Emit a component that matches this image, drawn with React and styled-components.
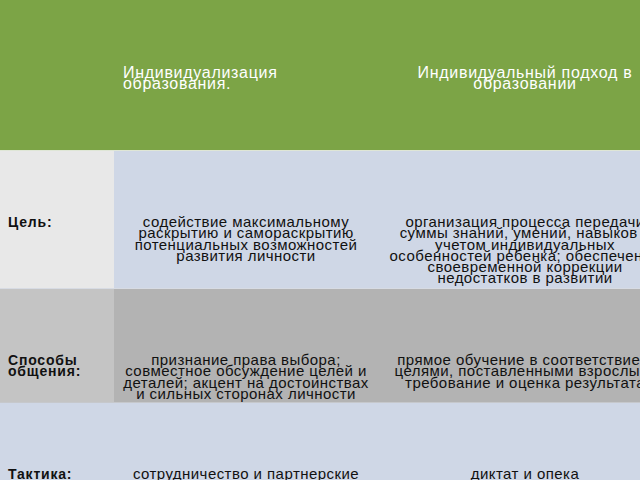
import React from "react";
import styled, { createGlobalStyle } from "styled-components";

const GlobalStyle = createGlobalStyle`
  html, body {
    margin: 0;
    padding: 0;
    background: #cfd7e6;
  }
  body {
    font-family: "Liberation Sans", Arial, sans-serif;
  }
`;

const Page = styled.div`
  width: 640px;
  height: 480px;
  overflow: hidden;
  background: #cfd7e6;
`;

const Table = styled.div`
  width: 672px;
  display: flex;
  flex-direction: column;
`;

const Row = styled.div`
  display: grid;
  grid-template-columns: 114px 264px 294px;
  height: ${p => p.$height}px;
  border-bottom: 1px solid ${p => p.$line || "transparent"};
`;

const Cell = styled.div`
  background: ${p => p.$bg};
  color: #111;
  font-size: 15px;
  line-height: 11.3px;
  letter-spacing: 0.45px;
  text-align: center;
  padding-top: 65px;
  white-space: nowrap;
  overflow: hidden;
`;

const LabelCell = styled(Cell)`
  font-size: 14px;
  letter-spacing: 0.8px;
  font-weight: 700;
  text-align: left;
  padding-top: 66px;
  padding-left: 8px;
`;

const HeadCell = styled(Cell)`
  background: #7ca446;
  color: #fff;
  font-size: 16px;
  letter-spacing: 0.7px;
  text-align: ${p => (p.$left ? "left" : "center")};
  padding-left: ${p => (p.$left ? 9 : 0)}px;
  padding-top: 67px;
`;

const rows = [
  {
    height: 150,
    line: "#dfe6d6",
    head: true,
    cells: [
      [""],
      ["Индивидуализация", "образования."],
      ["Индивидуальный подход в", "образовании"],
    ],
  },
  {
    height: 137,
    line: "#d7dbe3",
    bg: ["#e8e8e8", "#cfd7e6", "#cfd7e6"],
    cells: [
      ["Цель:"],
      [
        "содействие максимальному",
        "раскрытию и самораскрытию",
        "потенциальных возможностей",
        "развития личности",
      ],
      [
        "организация процесса передачи",
        "суммы знаний, умений, навыков с",
        "учетом индивидуальных",
        "особенностей ребенка; обеспечение",
        "своевременной коррекции",
        "недостатков в развитии",
      ],
    ],
  },
  {
    height: 113,
    line: "#c6c8cc",
    bg: ["#c4c4c4", "#b3b3b3", "#b3b3b3"],
    cells: [
      ["Способы", "общения:"],
      [
        "признание права выбора;",
        "совместное обсуждение целей и",
        "деталей; акцент на достоинствах",
        "и сильных сторонах личности",
      ],
      [
        "прямое обучение в соответствие с",
        "целями, поставленными взрослым;",
        "требование и оценка результата",
      ],
    ],
  },
  {
    height: 160,
    bg: ["#cfd7e6", "#cfd7e6", "#cfd7e6"],
    cells: [
      ["Тактика:"],
      ["сотрудничество и партнерские", "отношения"],
      ["диктат и опека"],
    ],
  },
];

const Lines = ({ lines }) =>
  lines.map((l, i) => (
    <React.Fragment key={i}>
      {l}
      {i < lines.length - 1 && <br />}
    </React.Fragment>
  ));

export default function App() {
  return (
    <Page>
      <GlobalStyle />
      <Table>
        {rows.map((row, r) => (
          <Row key={r} $height={row.height} $line={row.line}>
            {row.cells.map((lines, c) => {
              if (row.head) {
                return (
                  <HeadCell key={c} $left={c === 1}>
                    <Lines lines={lines} />
                  </HeadCell>
                );
              }
              if (c === 0) {
                return (
                  <LabelCell key={c} $bg={row.bg[c]}>
                    <Lines lines={lines} />
                  </LabelCell>
                );
              }
              return (
                <Cell key={c} $bg={row.bg[c]}>
                  <Lines lines={lines} />
                </Cell>
              );
            })}
          </Row>
        ))}
      </Table>
    </Page>
  );
}
